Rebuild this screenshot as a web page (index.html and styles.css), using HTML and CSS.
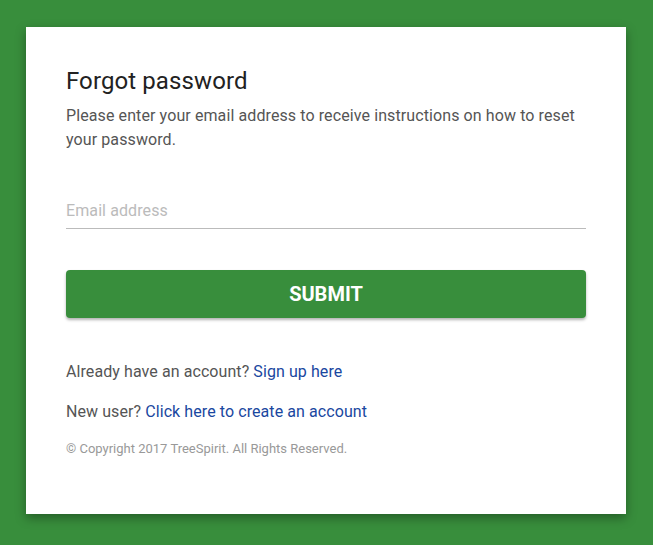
FILE: index.html
```html
<!DOCTYPE html>
<html>
<head>
<meta charset="utf-8">
<link rel="stylesheet" href="styles.css">
</head>
<body>
<div class="card">
  <h1 class="title">Forgot password</h1>
  <p class="intro">Please enter your email address to receive instructions on how to reset your password.</p>
  <div class="field">
    <input class="input" type="email" placeholder="Email address">
  </div>
  <button class="submit">SUBMIT</button>
  <p class="line first">Already have an account? <a href="#" class="link">Sign up here</a></p>
  <p class="line">New user? <a href="#" class="link">Click here to create an account</a></p>
  <p class="copy">© Copyright 2017 TreeSpirit. All Rights Reserved.</p>
</div>
</body>
</html>
```
FILE: styles.css
```css
html, body {
  margin: 0;
  padding: 0;
}
body {
  background: #388e3c;
  font-family: Roboto, "Liberation Sans", sans-serif;
  padding: 27px 0 0 26px;
  height: 545px;
  box-sizing: border-box;
  overflow: hidden;
}
.card {
  width: 600px;
  height: 487px;
  box-sizing: border-box;
  background: #fff;
  padding: 40px 40px 0 40px;
  box-shadow: 0 4px 10px rgba(0,0,0,0.35);
}
.title {
  margin: 0;
  font-size: 24px;
  font-weight: 400;
  line-height: 28px;
  color: #222;
  letter-spacing: 0.1px;
}
.intro {
  margin: 9px 0 0;
  font-size: 16px;
  line-height: 24px;
  color: #555;
  letter-spacing: 0.1px;
}
.field {
  margin-top: 41px;
}
.input {
  display: block;
  width: 100%;
  box-sizing: border-box;
  border: none;
  border-bottom: 1px solid #bbb;
  height: 36px;
  padding: 0;
  font-family: inherit;
  font-size: 16px;
  letter-spacing: 0.1px;
  color: #333;
  outline: none;
}
.input::placeholder {
  color: #bbb;
}
.submit {
  display: block;
  width: 100%;
  height: 48px;
  margin-top: 41px;
  border: none;
  border-radius: 4px;
  background: #388e3c;
  color: #fff;
  font-family: inherit;
  font-size: 20px;
  font-weight: 700;
  box-shadow: 0 2px 3px rgba(0,0,0,0.3);
}
.line {
  margin: 16px 0 0;
  font-size: 16px;
  line-height: 24px;
  color: #555;
  letter-spacing: 0.08px;
}
.line.first {
  margin-top: 42px;
}
.link {
  color: #1a47a0;
  text-decoration: none;
}
.copy {
  margin: 16px 0 0;
  font-size: 13px;
  line-height: 18px;
  color: #999;
}
```
